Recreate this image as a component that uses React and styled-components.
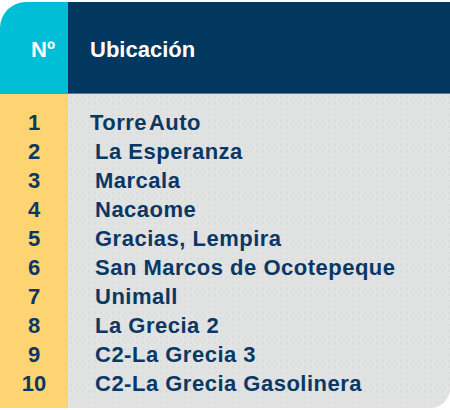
import React from "react";
import styled, { createGlobalStyle } from "styled-components";

const rows = [
	"Torre Auto",
	"La Esperanza",
	"Marcala",
	"Nacaome",
	"Gracias, Lempira",
	"San Marcos de Ocotepeque",
	"Unimall",
	"La Grecia 2",
	"C2-La Grecia 3",
	"C2-La Grecia Gasolinera",
];

const App = () => {
	return (
		<>
			<GlobalStyle />
			<Table>
				<HeadCell $tone="cyan" $center>
					Nº
				</HeadCell>
				<HeadCell $tone="navy">Ubicación</HeadCell>
				<NumCol>
					{rows.map((_, i) => (
						<Num key={i}>{i + 1}</Num>
					))}
				</NumCol>
				<NameCol>
					{rows.map((name, i) => (
						<Name key={name} $first={i === 0}>
							{name}
						</Name>
					))}
				</NameCol>
			</Table>
		</>
	);
};

export default App;

const GlobalStyle = createGlobalStyle`
	body {
		margin: 0;
		background: #ffffff;
		font-family: "Liberation Sans", Arial, sans-serif;
	}
`;

const Table = styled.div`
	margin-top: 2px;
	width: 450px;
	display: grid;
	grid-template-columns: 68px 1fr;
	grid-template-rows: 92px auto;
	border-top-left-radius: 26px;
	border-bottom-right-radius: 20px;
	overflow: hidden;
`;

const HeadCell = styled.div`
	background: ${(p) => (p.$tone === "cyan" ? "#00bed6" : "#023760")};
	color: #ffffff;
	font-weight: 700;
	font-size: 22px;
	display: flex;
	align-items: center;
	justify-content: ${(p) => (p.$center ? "center" : "flex-start")};
	padding-left: ${(p) => (p.$center ? "18px" : "22px")};
	padding-top: 3px;
	box-shadow: ${(p) => (p.$tone === "navy" ? "inset 0 -1px 0 #5d7a94" : "none")};
`;

const NumCol = styled.div`
	background: #fdd471;
	display: flex;
	flex-direction: column;
	padding: 14px 0 10px;
`;

const Num = styled.div`
	height: 29px;
	display: flex;
	align-items: center;
	justify-content: center;
	color: #0a3865;
	font-weight: 700;
	font-size: 22px;
`;

const NameCol = styled.div`
	background-color: #e1e2e2;
	background-image: radial-gradient(circle, #d4d6d6 0.6px, transparent 0.8px);
	background-size: 6px 6px;
	display: flex;
	flex-direction: column;
	padding: 14px 0 10px;
`;

const Name = styled.div`
	height: 29px;
	display: flex;
	align-items: center;
	padding-left: ${(p) => (p.$first ? "22px" : "27px")};
	color: #0a3865;
	font-weight: 700;
	font-size: 22px;
	letter-spacing: 0.5px;
	word-spacing: ${(p) => (p.$first ? "-4px" : "0")};
	white-space: nowrap;
`;
